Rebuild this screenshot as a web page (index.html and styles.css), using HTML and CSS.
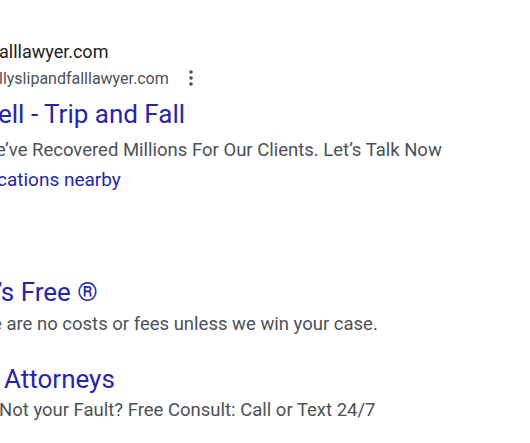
FILE: index.html
```html
<!DOCTYPE html>
<html>
<head>
<meta charset="utf-8">
<link rel="stylesheet" href="styles.css">
</head>
<body>
<div class="page">
  <div class="ad ad-main">
    <div class="site">alllawyer.com</div>
    <div class="url-row">
      <span class="url">llyslipandfalllawyer.com</span>
      <svg class="dots" width="4" height="16" viewBox="0 0 4 16"><circle cx="2" cy="2" r="1.8" fill="#4d5156"/><circle cx="2" cy="8" r="1.8" fill="#4d5156"/><circle cx="2" cy="14" r="1.8" fill="#4d5156"/></svg>
    </div>
    <div class="title">ell - Trip and Fall</div>
    <div class="desc">e’ve Recovered Millions For Our Clients. Let’s Talk Now</div>
    <div class="link">cations nearby</div>
  </div>
  <div class="sitelink sl-1">
    <div class="title">’s Free ®</div>
    <div class="desc shift">e are no costs or fees unless we win your case.</div>
  </div>
  <div class="sitelink sl-2">
    <div class="title">Attorneys</div>
    <div class="desc">Not your Fault? Free Consult: Call or Text 24/7</div>
  </div>
</div>
</body>
</html>
```
FILE: styles.css
```css
html, body { margin: 0; padding: 0; background: #fff; }
body { font-family: Roboto, Arial, sans-serif; overflow: hidden; width: 530px; height: 443px; }
.page { padding-top: 40px; }
.site { font-size: 18px; color: #202124; line-height: 24px; margin-left: -1px; }
.url-row { display: flex; align-items: center; gap: 20px; margin-top: 4px; height: 20px; }
.url { font-size: 16px; color: #4d5156; margin-left: -1px; }
.dots { display: block; }
.title { font-size: 26px; color: #2626a8; line-height: 32px; }
.ad-main .title { margin-top: 10px; margin-left: -2px; }
.desc { font-size: 18.5px; color: #4d5156; line-height: 24px; }
.ad-main .desc { margin-top: 8px; margin-left: -4px; }
.link { font-size: 19px; color: #2626a8; line-height: 24px; margin-top: 6px; margin-left: -3px; }
.sl-1 { margin-top: 84px; }
.sl-1 .title { margin-left: -3px; }
.shift { margin-left: -8px; margin-top: 4px; }
.sl-2 { margin-top: 27px; }
.sl-2 .title { padding-left: 4px; }
.sl-2 .desc { margin-top: 3px; margin-left: -1px; }
```
